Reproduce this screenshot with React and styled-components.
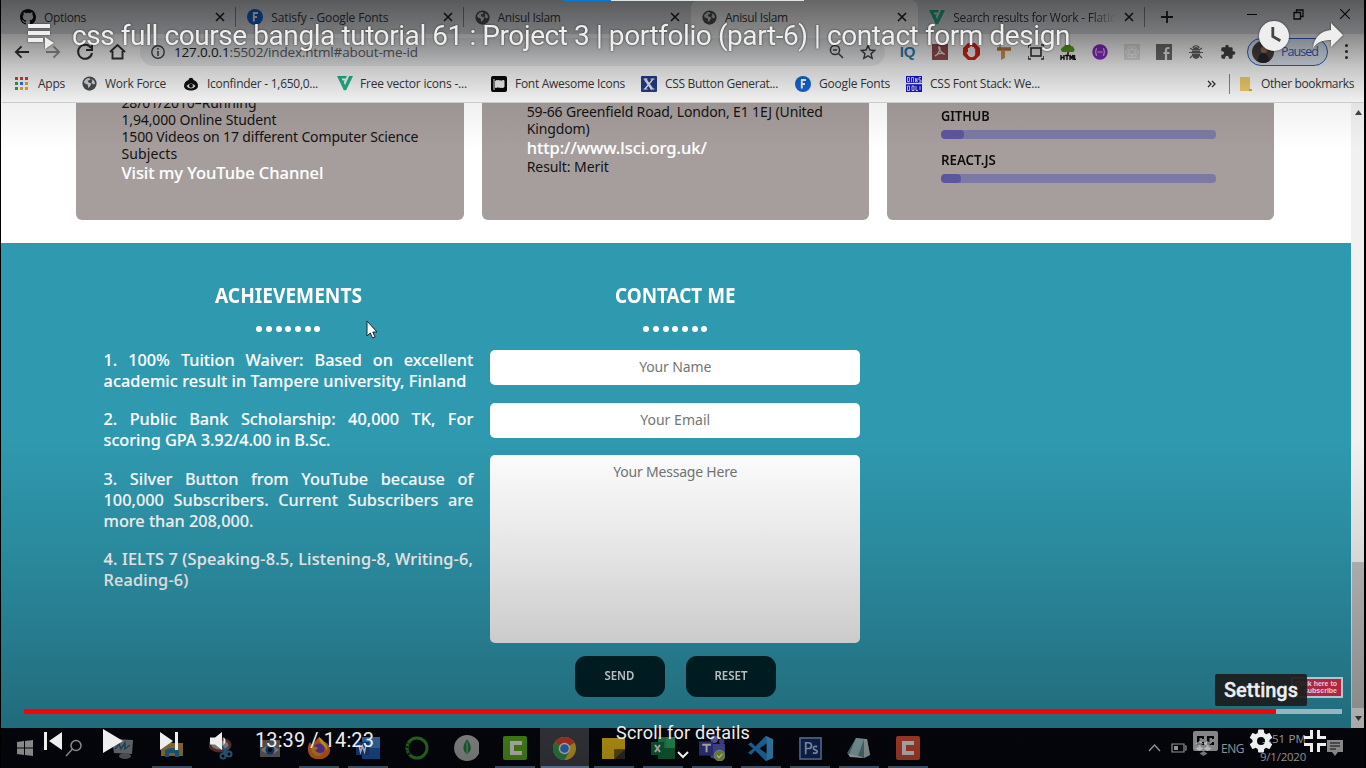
import React, { useLayoutEffect, useRef, useState } from "react";
import styled, { createGlobalStyle } from "styled-components";

const Global = createGlobalStyle`
  * { box-sizing: border-box; }
  html, body { margin: 0; padding: 0; background: #000; overflow: hidden; }
  body { font-family: "Open Sans", "Noto Sans", sans-serif; }
  svg { display: block; flex: none; }
`;

/* Text set to a known measure by adjusting its tracking. */
const Tracked = styled.span`
  display: inline-block;
  white-space: pre;
`;
function Fit({ w, children }) {
  const ref = useRef(null);
  const [spacing, setSpacing] = useState(0);
  useLayoutEffect(() => {
    const natural = ref.current.getBoundingClientRect().width;
    setSpacing((w - natural) / ref.current.textContent.length);
  }, [w]);
  return <Tracked ref={ref} style={{ letterSpacing: spacing }}>{children}</Tracked>;
}

/* Text set to a known measure by condensing its letterforms. */
const Condensed = styled(Tracked)`
  transform-origin: ${(p) => (p.$left ? "0 50%" : "50% 50%")};
`;
function Squeeze({ w, left, children }) {
  const ref = useRef(null);
  const [ratio, setRatio] = useState(1);
  useLayoutEffect(() => {
    setRatio(w / ref.current.offsetWidth);
  }, [w]);
  return <Condensed ref={ref} $left={left} style={{ transform: `scaleX(${ratio})` }}>{children}</Condensed>;
}

const Stage = styled.main`
  position: relative;
  width: 1366px;
  height: 768px;
  overflow: hidden;
  background: #000;
`;
const Desktop = styled.div`
  display: flex;
  flex-direction: column;
  width: 1366px;
  height: 768px;
  padding: 0 2px 0 1px;
`;

/* ---------- browser chrome ---------- */
const TabStrip = styled.div`
  display: flex;
  height: 34px;
  padding-left: 8px;
  background: #dee1e6;
  flex: none;
`;
const TabBox = styled.div`
  display: flex;
  align-items: center;
  width: 227.3px;
  padding: 0 ${(p) => (p.$divider ? 0 : 11)}px 0 11px;
  gap: 8px;
  font-size: 12px;
  color: #36383c;
  background: ${(p) => (p.$active ? "#fff" : "transparent")};
  border-radius: 8px 8px 0 0;
`;
const TabTitle = styled.div`
  flex: 1;
  overflow: hidden;
  white-space: nowrap;
  ${(p) => p.$fade && "mask-image: linear-gradient(90deg, #000 85%, transparent);"}
`;
const Divider = styled.i`
  width: 1px;
  height: 20px;
  background: #888;
  margin-left: ${(p) => p.$gap || 0}px;
  flex: none;
`;
const WindowButtons = styled.div`
  display: flex;
  align-items: center;
  justify-content: space-between;
  flex: none;
  width: 117px;
  margin-left: auto;
  padding: 0 13px 6px 0;
`;
const NewTab = styled.div`
  width: 40px;
  padding-left: 9px;
  display: flex;
  align-items: center;
`;
const AddressRow = styled.div`
  display: flex;
  align-items: center;
  height: 34px;
  padding-top: 1px;
  background: #fff;
  flex: none;
`;
const Nav = styled.div`
  display: flex;
  width: 139px;
  padding-left: 13px;
  gap: 15px;
  align-items: center;
`;
const UrlPill = styled.div`
  display: flex;
  align-items: center;
  width: 745px;
  height: 28px;
  padding: 0 8px 0 11px;
  border-radius: 14px;
  background: #eceef0;
  font-size: 13.5px;
  color: #5d6065;
  gap: 9px;
  b { font-weight: 400; color: #202124; }
`;
const UrlText = styled.div`flex: 1;`;
const PillIcons = styled.div`display: flex; gap: 16px; padding-right: 1px;`;
const Extensions = styled.div`
  display: flex;
  align-items: center;
  padding-left: 7px;
  > * { width: 32.05px; display: flex; justify-content: center; }
`;
const IqMark = styled.b`
  font: 700 15px/16px "Liberation Sans", sans-serif;
  color: #2c83b8;
`;
const Profile = styled.div`
  display: flex;
  align-items: center;
  width: 81px;
  height: 28px;
  margin-left: 3px;
  padding-left: 4px;
  gap: 7px;
  border: 1px solid #2c62c8;
  border-radius: 14px;
  background: #e3ebf8;
  color: #2a62c6;
  font-size: 12.5px;
`;
const Kebab = styled.div`
  width: 36px;
  display: flex;
  flex-direction: column;
  align-items: center;
  gap: 3px;
  i { width: 3px; height: 3px; border-radius: 50%; background: #333; }
`;
const Bookmarks = styled.div`
  display: grid;
  grid-template-columns: 67px 102px 153px 154px 150px 154px 111px 301px 22px 1fr;
  align-items: center;
  height: 35px;
  padding: 0 0 3px 14px;
  background: #fff;
  border-bottom: 1px solid #d8d8d8;
  font-size: 12px;
  color: #36383c;
  flex: none;
`;
const Mark = styled.div`
  display: flex;
  align-items: center;
  white-space: nowrap;
  gap: ${(p) => p.$gap || 8}px;
`;

/* ---------- page ---------- */
const Viewport = styled.div`
  display: flex;
  height: 625px;
  background: #fff;
  overflow: hidden;
  flex: none;
`;
const Page = styled.div`
  width: 1350px;
  display: flex;
  flex-direction: column;
  font-family: "Noto Sans", "Open Sans", sans-serif;
`;
const Cards = styled.section`
  display: flex;
  gap: 18px;
  height: 117px;
  padding-left: 75.4px;
  margin-bottom: 23px;
  flex: none;
`;
const Card = styled.article`
  width: 387.3px;
  padding: ${(p) => p.$top}px 0 0 ${(p) => p.$left || 45}px;
  background: #a69e9d;
  border-radius: 0 0 6px 6px;
  overflow: hidden;
`;
const CardLine = styled.div`
  height: 17px;
  font-size: 14px;
  line-height: 17px;
  color: #131313;
  white-space: nowrap;
`;
const CardLink = styled.div`
  height: 21px;
  font-size: 16.5px;
  line-height: 21px;
  font-weight: 500;
  color: #fff;
  -webkit-text-stroke: 0.1px #fff;
  white-space: nowrap;
`;
const Running = styled(CardLine)`margin-top: -9px;`;
const SkillName = styled.h4`
  margin: 0 0 6px;
  font-size: 14px;
  line-height: 17px;
  font-weight: 600;
  color: #0d0d0d;
`;
const SkillBar = styled.div`
  width: 275px;
  height: 9px;
  margin-bottom: 12px;
  border-radius: 4px;
  background: #7a7aa4;
  overflow: hidden;
`;
const SkillFill = styled.div`
  width: ${(p) => p.$w}px;
  height: 9px;
  border-radius: 4px;
  background: #5b579d;
`;
const Footer = styled.section`
  display: flex;
  flex: 1;
  gap: 17px;
  padding: 37px 0 0 102.5px;
  background: #2f99af;
`;
const Column = styled.div`
  width: 369.8px;
  display: flex;
  flex-direction: column;
`;
const Heading = styled.h2`
  margin: 0;
  height: 28px;
  text-align: center;
  font-size: 22px;
  line-height: 29px;
  font-weight: 700;
  color: #fff;
`;
const Dots = styled.div`
  display: flex;
  justify-content: center;
  gap: 3.7px;
  margin: 18px 0 18px;
  i { width: 6px; height: 6px; border-radius: 50%; background: #fff; }
`;
const Award = styled.p`
  margin: 0 0 17.4px;
  font-size: 16.3px;
  line-height: 21px;
  font-weight: 500;
  color: #fff;
  -webkit-text-stroke: 0.1px #fff;
`;
const Full = styled.span`
  display: block;
  text-align: justify;
  text-align-last: justify;
  white-space: nowrap;
`;
const Field = styled.div`
  height: ${(p) => p.$h}px;
  margin-bottom: ${(p) => p.$gap}px;
  padding-top: 7px;
  border-radius: 5px;
  background: #fff;
  color: #757575;
  text-align: center;
  font-size: 14px;
  line-height: 20px;
`;
const Actions = styled.div`
  display: flex;
  justify-content: center;
  gap: 21px;
`;
const Action = styled.div`
  display: flex;
  align-items: center;
  justify-content: center;
  width: 90px;
  height: 41px;
  padding-bottom: 2px;
  border-radius: 11px;
  background: #00242b;
  color: #f2f8fa;
  font-size: 12.5px;
  font-weight: 600;
`;
const ScrollTrack = styled.div`
  width: 13px;
  display: flex;
  flex-direction: column;
  align-items: center;
  padding: 7px 0 7px 1px;
  background: #f1f1f1;
`;
const ScrollThumb = styled.div`
  width: 12px;
  height: 148px;
  margin: 447px 0 8px;
  background: #c1c1c1;
`;

/* ---------- taskbar ---------- */
const Taskbar = styled.div`
  display: flex;
  height: 40px;
  background: #05080f;
  flex: none;
`;
const TaskIcons = styled.div`
  display: flex;
  margin-left: -1px;
`;
const TaskSlot = styled.div`
  display: flex;
  align-items: center;
  justify-content: center;
  width: 49.1px;
  background: ${(p) =>
    p.$active
      ? "linear-gradient(#88aacc, #88aacc) 50% 100% / 48px 2px no-repeat, #42454c"
      : p.$open
      ? "linear-gradient(#587795, #587795) 50% 100% / 40px 2px no-repeat"
      : "none"};
  > svg { opacity: ${(p) => (p.$dim ? 0.8 : 1)}; }
`;
const Tray = styled.div`
  display: flex;
  align-items: center;
  margin-left: auto;
  padding-right: 1px;
  color: #dcdcdc;
  font-size: 12px;
`;
const Clock = styled.div`
  width: 62px;
  text-align: right;
  font-size: 11.5px;
  line-height: 18px;
`;

/* ---------- player overlay ---------- */
const Shade = styled.div`
  position: absolute;
  inset: 0;
  background:
    linear-gradient(rgba(0,0,0,.6) 0, rgba(0,0,0,.46) 34px, rgba(0,0,0,.22) 68px, rgba(0,0,0,.06) 102px, transparent 150px),
    linear-gradient(transparent 440px, rgba(0,0,0,.1) 550px, rgba(0,0,0,.2) 640px, rgba(0,0,0,.3) 728px, rgba(0,0,0,.38) 768px);
`;
const SubscribeBadge = styled.div`
  position: absolute;
  left: 1291px;
  top: 677px;
  width: 52px;
  height: 21px;
  border: 2px solid #b5c3ca;
  background: #ad2642;
  color: #e7cdd3;
  text-align: right;
  padding: 1px 4px 0 0;
  font: 700 7px/7px "Liberation Sans", sans-serif;
  white-space: nowrap;
`;
const LoadBar = styled.div`
  position: absolute;
  left: 563px;
  top: 0;
  display: flex;
  width: 241px;
  height: 1px;
  background: #dce4e2;
  &::before { content: ""; width: 48px; background: #0878d6; }
`;
const TitleBar = styled.header`
  position: absolute;
  left: 0;
  right: 0;
  top: 12px;
  height: 48px;
  display: flex;
  align-items: center;
  padding: 0 22px 0 27px;
  color: #eee;
  filter: drop-shadow(0 0 1px rgba(0,0,0,.6));
`;
const Title = styled.h1`
  flex: 1;
  margin: 0 0 0 17px;
  font: 400 28px/40px Roboto, sans-serif;
  white-space: nowrap;
  padding-bottom: 1px;
`;
const TitleActions = styled.div`display: flex; gap: 22px; align-items: center;`;
const Tooltip = styled.div`
  position: absolute;
  left: 1215px;
  top: 674px;
  width: 92px;
  height: 32px;
  border-radius: 2px;
  background: rgba(28,28,28,.92);
  color: #eee;
  text-align: center;
  font: 500 20px/32px Roboto, sans-serif;
  -webkit-text-stroke: 0.3px #eee;
`;
const Player = styled.footer`
  position: absolute;
  left: 24px;
  right: 24px;
  top: 709px;
  display: flex;
  flex-direction: column;
`;
const Progress = styled.div`
  height: 5px;
  background: #94b7bf;
`;
const Played = styled.div`
  width: 1252px;
  height: 5px;
  background: #f00;
`;
const Controls = styled.div`
  display: flex;
  align-items: center;
  height: 54px;
  color: #eee;
  font: 400 20px/24px Roboto, sans-serif;
  white-space: nowrap;
`;
const Transport = styled.div`
  display: flex;
  align-items: center;
  width: 592px;
  padding-left: 20px;
`;
const Elapsed = styled.div`margin: 0 0 3px 27px;`;
const Details = styled.div`
  width: 134px;
  height: 54px;
  padding-top: 7px;
  font-size: 18px;
  display: flex;
  flex-direction: column;
  align-items: center;
`;
const RightControls = styled.div`
  display: flex;
  align-items: center;
  margin-left: auto;
  padding-right: 16px;
  gap: 31px;
`;
const Pointer = styled.div`position: absolute; left: 366px; top: 320px;`;

/* ---------- drawings ---------- */
const Svg = ({ s = 16, w, h, vb = "0 0 24 24", children, ...r }) => (
  <svg width={w || s} height={h || s} viewBox={vb} fill="currentColor" {...r}>{children}</svg>
);
const line = { fill: "none", stroke: "currentColor" };

const CloseX = ({ s = 10, c = "#222", sw = 1.6 }) => (
  <Svg s={s} vb="0 0 10 10"><path d="M1 1L9 9M9 1L1 9" fill="none" stroke={c} strokeWidth={sw} /></Svg>
);
const Github = () => (
  <Svg s={16} vb="0 0 16 16"><path fill="#111" d="M8 0C3.58 0 0 3.58 0 8c0 3.54 2.29 6.53 5.47 7.59.4.07.55-.17.55-.38 0-.19-.01-.82-.01-1.49-2.01.37-2.53-.49-2.69-.94-.09-.23-.48-.94-.82-1.13-.28-.15-.68-.52-.01-.53.63-.01 1.08.58 1.23.82.72 1.21 1.87.87 2.33.66.07-.52.28-.87.51-1.07-1.78-.2-3.64-.89-3.64-3.95 0-.87.31-1.59.82-2.15-.08-.2-.36-1.02.08-2.12 0 0 .67-.21 2.2.82a7.6 7.6 0 014 0c1.53-1.04 2.2-.82 2.2-.82.44 1.1.16 1.92.08 2.12.51.56.82 1.27.82 2.15 0 3.07-1.87 3.75-3.65 3.95.29.25.54.73.54 1.48 0 1.07-.01 1.93-.01 2.2 0 .21.15.46.55.38A8 8 0 0016 8c0-4.42-3.58-8-8-8z" /></Svg>
);
const Globe = () => (
  <Svg s={15} vb="0 0 16 16">
    <circle cx="8" cy="8" r="7.6" fill="#4c4f53" />
    <path d="M2 6c2-3 3-4 6-4l1 2-3 1 1 2 3 1-1 2-2 3-1-4-3-1zM10 3l3 2 1 3-2 1-2-2 1-2z" fill="#d8dadd" />
  </Svg>
);
const CircleF = () => (
  <Svg s={16} vb="0 0 16 16"><circle cx="8" cy="8" r="8" fill="#1467d8" /><path d="M6 4h5M6.8 4v8.5M6.8 8H10" stroke="#fff" strokeWidth="1.9" fill="none" /></Svg>
);
const Flaticon = () => (
  <Svg w={16} h={15} vb="0 0 16 15"><path d="M0 0h10L8.800 2.400H4.600L5.600 4.400H7.800L6.800 6.600 8 9 12.200 0H16L9.200 14.200H6.800z" fill="#25b58c" /></Svg>
);
const AppsGrid = () => (
  <Svg s={13} vb="0 0 13 13">
    {["#d33c32", "#d33c32", "#d33c32", "#2f9d58", "#2d76d6", "#e5a92c", "#2f9d58", "#e5a92c", "#e5a92c"].map((c, i) => (
      <rect key={i} x={(i % 3) * 5} y={Math.floor(i / 3) * 5} width="3" height="3" fill={c} />
    ))}
  </Svg>
);
const EyeLogo = () => (
  <Svg w={14} h={14} vb="0 0 14 14"><path d="M4.500 3C5 0 9 0 9.500 3c3 1 4.500 3 4.500 6 0 6-14 6-14 0 0-3 1.500-5 4.500-6z" fill="#111" /><path d="M2.500 9q4.500-5 9 0-4.500 5-9 0z" fill="#eee" /><circle cx="7" cy="8.800" r="2" fill="#111" /></Svg>
);
const FlagLogo = () => (
  <Svg s={16} vb="0 0 16 16"><rect width="16" height="16" rx="2" fill="#080808" /><path d="M3 3v11M4.500 5c3-1.500 4 1 8.500-.5V11c-4 1.500-5-1-8.500.5z" fill="#f1f1f1" stroke="#f1f1f1" /></Svg>
);
const XLogo = () => (
  <Svg s={16} vb="0 0 16 16"><rect width="16" height="16" rx="1" fill="#263c86" /><path d="M4 3l7 10M12 3L4 13" stroke="#e6e8f4" strokeWidth="1.400" /><path d="M4 3l7 10" stroke="#e6e8f4" strokeWidth="2.400" /><path d="M2.500 3h4M9.500 3h4M2.500 13h4M9.500 13h4" stroke="#e6e8f4" /></Svg>
);
const DansLogo = () => (
  <Svg s={16} vb="0 0 16 16"><rect width="16" height="16" fill="#1515d0" /><path d="M0 7.500h16" stroke="#fff" strokeWidth="1.400" /><path d="M1.500 1.500v4h2v-4zM5.500 6V1.500h2V6M9.500 6V2l1.500 4V2M15 1.500h-2V4h2v2h-2M1.500 10v4.500h2V10zM6 10h2v4.500H6zM10 10v4.500h2M14 10v4" fill="none" stroke="#fff" strokeWidth=".8" /></Svg>
);
const Folder = () => (
  <Svg w={13} h={14} vb="0 0 13 14"><path d="M1 0h10v12l1 2H1z" fill="#f2cf6a" /><path d="M10 12h3v2h-3z" fill="#d5aa3a" /></Svg>
);
const Back = ({ flip, c = "#333" }) => (
  <Svg w={16} h={14} vb="0 0 17 14" style={flip ? { transform: "scaleX(-1)" } : undefined}><path d="M16 7H2M8 1L2 7l6 6" fill="none" stroke={c} strokeWidth="2" /></Svg>
);

const extensionIcons = [
  <IqMark key="iq">IQ</IqMark>,
  <Svg key="pdf" vb="0 0 16 16"><rect width="16" height="16" fill="#97504f" /><path d="M3 12c4-2 6-8 4.500-9S6 7 12.800 10.500C10 8.500 5 9.500 3 12z" fill="none" stroke="#ecdada" strokeWidth="1.300" /></Svg>,
  <Svg key="hand" w={17} h={17} vb="0 0 17 17"><path d="M5 0h7l5 5v7l-5 5H5l-5-5V5z" fill="#df2118" /><path d="M5 9V5h1.500V3.500H8V3h1.300v1H11v1.500h1.200V11c0 4-6 4-7.200 1L3.500 9.500z" fill="#fff" /></Svg>,
  <Svg key="crane" vb="0 0 16 16"><path d="M1 3h14v4H9v7l-4 2V7H1z" fill="#d39a5b" /><path d="M4 1v4M1 5h14" stroke="#9c6830" /></Svg>,
  <Svg key="frame" vb="0 0 16 16"><rect x="3" y="4" width="10" height="8" {...line} stroke="#333" strokeWidth="1.600" /><path d="M0 4V1h3M13 1h3v3M0 12v3h3M13 15h3v-3" fill="none" stroke="#333" strokeWidth="1.500" /></Svg>,
  <Svg key="tree" vb="0 0 16 16"><path d="M7 5h2v6H7z" fill="#6d4a20" /><path d="M1 6C1 3 4 3 5 1c2-2 5-1 6 1 3 0 5 5 2 6H3C2 8 1 7 1 6z" fill="#58a51d" /><path d="M1 11v5M4 11v5M1 13.500h3M5 11.500h4M7 11v5M10 16v-5l1.500 3 1.500-3v5M14.500 11v4.500H16" fill="none" stroke="#111" strokeWidth="1.400" /></Svg>,
  <Svg key="braces" vb="0 0 16 16"><circle cx="8" cy="8" r="7.700" fill="#8a2bc6" /><path d="M5 4.500c-2 0 0 3.500-2 3.500 2 0 0 3.500 2 3.500M11 4.500c2 0 0 3.500 2 3.500-2 0 0 3.500-2 3.500M5.500 8h5" fill="none" stroke="#ecd4fa" strokeWidth="1.200" /></Svg>,
  <Svg key="atom" vb="0 0 16 16" opacity=".35"><rect width="16" height="16" fill="#aaa" /><g {...line} stroke="#eee"><ellipse cx="8" cy="8" rx="6.500" ry="2.500" /><ellipse cx="8" cy="8" rx="6.500" ry="2.500" transform="rotate(60 8 8)" /><ellipse cx="8" cy="8" rx="6.500" ry="2.500" transform="rotate(120 8 8)" /></g></Svg>,
  <Svg key="fb" vb="0 0 16 16"><rect width="16" height="16" fill="#717171" /><path d="M13.500 4H12c-1.500 0-2 1-2 2.200V16M7.500 9h6" fill="none" stroke="#f1f1f1" strokeWidth="2.200" /></Svg>,
  <Svg key="bug" vb="0 0 16 16"><path d="M5 4c0-3 6-3 6 0M2 4l3 2M14 4l-3 2M1 8.500h3M12 8.500h3M2 14l3-3M14 14l-3-3" fill="none" stroke="#666" strokeWidth="1.200" /><ellipse cx="8" cy="9" rx="4.200" ry="6" fill="#666" /><path d="M4 6.500h8M4 9.500h8" stroke="#aaa" /></Svg>,
  <Svg key="puzzle" vb="0 0 24 24"><path fill="#454545" d="M20.500 11H19V7a2 2 0 00-2-2h-4V3.500a2.500 2.500 0 00-5 0V5H4a2 2 0 00-2 2v3.800h1.500a2.700 2.700 0 010 5.400H2V20c0 1.100.9 2 2 2h3.800v-1.500a2.700 2.700 0 015.400 0V22H17a2 2 0 002-2v-4h1.500a2.500 2.500 0 000-5z" /></Svg>,
];

const tabs = [
  { icon: <Github />, title: "Options", w: 42, divider: true },
  { icon: <CircleF />, title: "Satisfy - Google Fonts", w: 117, divider: true },
  { icon: <Globe />, title: "Anisul Islam", w: 63 },
  { icon: <Globe />, title: "Anisul Islam", w: 63, active: true },
  { icon: <Flaticon />, title: "Search results for Work - Flatic", w: 162, fade: true, divider: true },
];
const bookmarks = [
  [<AppsGrid />, "Apps", 27, 10],
  [<Globe />, "Work Force", 61, 8],
  [<EyeLogo />, "Iconfinder - 1,650,0...", 111, 9],
  [<Flaticon />, "Free vector icons -...", 107, 7],
  [<FlagLogo />, "Font Awesome Icons", 110, 8],
  [<XLogo />, "CSS Button Generat...", 113, 8],
  [<CircleF />, "Google Fonts", 71, 8],
  [<DansLogo />, "CSS Font Stack: We...", 110, 8],
];

const Tile = ({ bg, children }) => (
  <Svg s={24} vb="0 0 24 24"><rect width="24" height="24" rx="2" fill={bg} />{children}</Svg>
);
const taskIcons = [
  { i: <Svg s={16} vb="0 0 16 16"><path fill="#ccc" d="M0 2l7-1v6.500H0zM8 1l8-1v7.500H8zM0 8.500h7V15l-7-1zM8 8.500h8V16l-8-1z" /></Svg> },
  { i: <Svg s={18} vb="0 0 18 18"><circle cx="11" cy="6.500" r="5" {...line} stroke="#ccc" strokeWidth="1.500" /><path d="M7.500 10L1 17" stroke="#ccc" strokeWidth="1.500" /></Svg> },
  { i: <Svg s={24}><path d="M1 3l21 1-1 14-18-1z" fill="#aab5bc" /><path d="M4 13l4-5 2 5 4-6v6l5-4" {...line} stroke="#347899" strokeWidth="1.500" /><ellipse cx="14" cy="20" rx="6" ry="3" fill="#8b9398" /></Svg>, dim: true },
  { i: <Svg s={24}><path d="M1 4h9l2 3h11v13H1z" fill="#e5bb58" /><path d="M5 21v-7q7-4 14 0v7h-4v-4H9v4z" fill="#3198cc" /></Svg>, open: true, dim: true },
  { i: <Svg s={24}><ellipse cx="11" cy="9" rx="10" ry="6" fill="#ddd" stroke="#a3494b" strokeWidth="3" /><path d="M13 10l5 8M20 11l-6 7" stroke="#4796ca" strokeWidth="2" /><circle cx="14" cy="20" r="2.500" {...line} stroke="#4796ca" strokeWidth="2" /><circle cx="20" cy="18" r="2.500" {...line} stroke="#4796ca" strokeWidth="2" /></Svg>, dim: true },
  { i: <Svg s={24}><path d="M2 4h20v17H2z" fill="#949089" /><path d="M3 14q9-9 18 0-9 8-18 0z" fill="#ddd" /><circle cx="12" cy="14" r="4.500" fill="#2857aa" /><circle cx="12" cy="14" r="2" fill="#111" /></Svg>, dim: true },
  { i: <Svg s={24}><path d="M12 1c4 3 4 5 8 6 8 10-2 17-8 16C2 24-2 14 3 6l2 3c2-1 2-3 7-8z" fill="#f0702a" /><path d="M12 1c4 3 10 9 8 14-2-7-8-6-8-14z" fill="#ffd43d" /><circle cx="12" cy="13" r="5.500" fill="#7441b4" /><path d="M4 12q4-3 7 0-1 2-3 2 3 5 9 2-6 8-12 0z" fill="#f39a2c" /></Svg>, open: true },
  { i: <Svg s={24}><path d="M6 1h18v22H6z" fill="#3c88d6" /><path d="M6 12h18v11H6z" fill="#1f5cb0" /><rect y="6" width="13" height="13" fill="#1749a0" /><path d="M3 9l1.500 7L6.500 10l2 6L10 9" {...line} stroke="#fff" strokeWidth="1.500" /></Svg>, open: true },
  { i: <Svg s={24}><circle cx="12" cy="12" r="10" {...line} stroke="#3fae33" strokeWidth="3" /><circle cx="12" cy="12" r="10" {...line} stroke="#123c11" strokeWidth="2.500" strokeDasharray="2 2 1 2 2 2 1 50" transform="rotate(140 12 12)" /></Svg>, dim: true },
  { i: <Svg s={26}><circle cx="13" cy="12" r="12" fill="#d7ddda" /><path d="M13 4c5 6 4 11 0 14-4-3-5-8 0-14z" fill="#2e9b50" /><path d="M13 7v14" stroke="#b7e0c1" /></Svg>, dim: true },
  { i: <Tile bg="#5aab1d"><path d="M19 7H9v10h10" {...line} stroke="#eee" strokeWidth="4" /></Tile>, open: true },
  { i: <Svg s={23}><circle cx="12" cy="12" r="12" fill="#e3b72d" /><path d="M12 12L1.600 6A12 12 0 0122.400 6z" fill="#d8432f" /><path d="M1.600 6A12 12 0 0012 24l5-9-5-3z" fill="#359c51" /><circle cx="12" cy="12" r="6" fill="#eee" /><circle cx="12" cy="12" r="4.500" fill="#3b7ee0" /></Svg>, active: true },
  { i: <Svg s={23}><path d="M0 1h24v13L14 23H0z" fill="#eec317" /><path d="M24 13v10H13V13z" fill="#343434" /><path d="M24 13L13 23V13z" fill="#765e12" /></Svg>, open: true },
  { i: <Svg s={24}><path d="M7 1h17v22H7z" fill="#229a5a" /><path d="M7 12h17v11H7z" fill="#18713f" /><path d="M15 1h9v11h-9z" fill="#2fae6c" /><path d="M0 6h13v13H0z" fill="#107040" /><path d="M4 9l5 7M9 9l-5 7" stroke="#eee" strokeWidth="2" /></Svg>, open: true },
  { i: <Svg s={26}><circle cx="14" cy="4" r="3.500" fill="#7378d4" /><circle cx="21" cy="6" r="2.500" fill="#5159bd" /><path d="M7 8h17v8q-4 8-13 5z" fill="#595fc2" /><path d="M0 6h13v13H0z" fill="#3b429f" /><path d="M3 9h8M7 9v7" stroke="#eee" strokeWidth="1.800" /><circle cx="19" cy="19" r="5" fill="#92bd3a" stroke="#ddd" strokeWidth=".6" /><path d="M16.500 19l2 2 3-3.500" {...line} stroke="#fff" strokeWidth="1.400" /></Svg>, open: true },
  { i: <Svg s={25}><path d="M17 0l7 3v18l-7 3L7 14l-4 4-3-2 5-4-5-4 3-2 4 4zm1 7l-7 5 7 5z" fill="#278bd2" /><path d="M17 0l7 3v18l-7 3 1-3V3z" fill="#45a5e6" /></Svg>, open: true },
  { i: <Svg s={23}><rect x="1" y="1" width="22" height="22" fill="#162b62" stroke="#7fa9dc" strokeWidth="1.500" /><path d="M7 18V6h3q3 0 3 3t-3 3H7M19 10q-4-1-4 1.500 0 1.500 2 2t2 2q0 2-4.500 1" {...line} stroke="#a9cdf2" strokeWidth="1.800" /></Svg>, open: true },
  { i: <Svg s={24}><path d="M9 2l11 1 3 16-6 3-14-2-3-3z" fill="#5d8a94" /><path d="M9 2l8 1-6 17-9-1z" fill="#a3c6cb" /><path d="M17 3l3 0 3 16-6 3z" fill="#b9c8c9" /><path d="M1 18l11 2 5 2-14-1z" fill="#dadfdd" /></Svg>, open: true },
  { i: <Tile bg="#d64e35"><path d="M18 7H8v10h10" {...line} stroke="#eee" strokeWidth="4" /></Tile>, open: true },
];

export default function App() {
  return (
    <Stage>
      <Global />
      <Desktop>
        <TabStrip>
          {tabs.map((t, i) => (
            <TabBox key={i} $active={t.active} $divider={t.divider}>
              {t.icon}
              <TabTitle $fade={t.fade}><Fit w={t.w}>{t.title}</Fit></TabTitle>
              <CloseX />
              {t.divider && <Divider $gap={2} />}
            </TabBox>
          ))}
          <NewTab>
            <Svg s={24} vb="0 0 24 24"><path d="M13 6v12M7 12h12" stroke="#222" strokeWidth="1.800" /></Svg>
          </NewTab>
          <WindowButtons>
            <Svg s={10} vb="0 0 10 10"><path d="M0 5.500h10" stroke="#111" /></Svg>
            <Svg s={11} vb="0 0 11 11"><path d="M1 3.500h6.500V10H1zM3.500 3V1H10v6.500H8" fill="none" stroke="#111" strokeWidth="1.300" /></Svg>
            <CloseX s={12} c="#111" sw={1} />
          </WindowButtons>
        </TabStrip>

        <AddressRow>
          <Nav>
            <Back /><Back flip c="#999" />
            <Svg s={18} vb="0 0 18 18"><path d="M15 5A7 7 0 1016 10M16 1v6h-6" {...line} stroke="#333" strokeWidth="2" /></Svg>
            <Svg s={17} vb="0 0 17 17"><path d="M1 9l7.500-7L16 9M3.500 8v7.500h10V8" {...line} stroke="#333" strokeWidth="1.900" /></Svg>
          </Nav>
          <UrlPill>
            <Svg s={14} vb="0 0 14 14"><circle cx="7" cy="7" r="6.200" {...line} stroke="#444" strokeWidth="1.400" /><path d="M7 3v1.600M7 6v5" stroke="#444" strokeWidth="1.500" /></Svg>
            <UrlText><Fit w={244}><b>127.0.0.1</b>:5502/index.html#about-me-id</Fit></UrlText>
            <PillIcons>
              <Svg s={15} vb="0 0 15 15"><circle cx="6" cy="6" r="4.600" {...line} stroke="#444" strokeWidth="1.500" /><path d="M9.500 9.500L14 14M4 6h4" stroke="#444" strokeWidth="1.500" /></Svg>
              <Svg s={16} vb="0 0 24 24"><path d="M12 2.500l2.900 6.500 7 .7-5.300 4.700 1.600 7L12 17.700l-6.200 3.700 1.600-7L2.100 9.700l7-.7z" {...line} stroke="#444" strokeWidth="2.200" /></Svg>
            </PillIcons>
          </UrlPill>
          <Extensions>{extensionIcons.map((icon, i) => <div key={i}>{icon}</div>)}</Extensions>
          <Profile>
            <Svg s={22} vb="0 0 20 20"><circle cx="10" cy="10" r="10" fill="#49413f" /><path d="M5 18q1-7 5-7t6 7q-6 4-11 0z" fill="#26272c" /><circle cx="11" cy="8" r="3" fill="#a0715c" /></Svg>
            <Fit w={37}>Paused</Fit>
          </Profile>
          <Kebab><i /><i /><i /></Kebab>
        </AddressRow>

        <Bookmarks>
          {bookmarks.map(([icon, name, w, gap]) => (
            <Mark key={name} $gap={gap}>{icon}<Fit w={w}>{name}</Fit></Mark>
          ))}
          <Mark $gap={9}>
            <Svg w={9} h={8} vb="0 0 9 8"><path d="M1 1l3 3-3 3M5 1l3 3-3 3" {...line} stroke="#333" strokeWidth="1.300" /></Svg>
          </Mark>
          <Mark $gap={9}><Divider /><Folder /><Fit w={93}>Other bookmarks</Fit></Mark>
        </Bookmarks>

        <Viewport>
          <Page>
            <Cards>
              <Card $top={0}>
                <Running><Fit w={135}>28/01/2010–Running</Fit></Running>
                <CardLine><Fit w={155}>1,94,000 Online Student</Fit></CardLine>
                <CardLine><Fit w={297}>1500 Videos on 17 different Computer Science</Fit></CardLine>
                <CardLine><Fit w={56}>Subjects</Fit></CardLine>
                <CardLink><Fit w={202}>Visit my YouTube Channel</Fit></CardLink>
              </Card>
              <Card $top={0}>
                <CardLine><Fit w={296}>59-66 Greenfield Road, London, E1 1EJ (United</Fit></CardLine>
                <CardLine><Fit w={63}>Kingdom)</Fit></CardLine>
                <CardLink><Fit w={180}>http://www.lsci.org.uk/</Fit></CardLink>
                <CardLine><Fit w={82}>Result: Merit</Fit></CardLine>
              </Card>
              <Card $top={4} $left={54}>
                <SkillName><Squeeze left w={49}>GITHUB</Squeeze></SkillName>
                <SkillBar><SkillFill $w={23} /></SkillBar>
                <SkillName><Squeeze left w={55}>REACT.JS</Squeeze></SkillName>
                <SkillBar><SkillFill $w={20} /></SkillBar>
              </Card>
            </Cards>
            <Footer>
              <Column>
                <Heading><Squeeze w={147}>ACHIEVEMENTS</Squeeze></Heading>
                <Dots>{Array.from({ length: 7 }, (_, i) => <i key={i} />)}</Dots>
                <Award>
                  <Full>1. 100% Tuition Waiver: Based on excellent</Full>
                  <Fit w={363}>academic result in Tampere university, Finland</Fit>
                </Award>
                <Award>
                  <Full>2. Public Bank Scholarship: 40,000 TK, For</Full>
                  <Fit w={227}>scoring GPA 3.92/4.00 in B.Sc.</Fit>
                </Award>
                <Award>
                  <Full>3. Silver Button from YouTube because of</Full>
                  <Full>100,000 Subscribers. Current Subscribers are</Full>
                  <Fit w={150}>more than 208,000.</Fit>
                </Award>
                <Award>
                  <Fit w={369.5}>4. IELTS 7 (Speaking-8.5, Listening-8, Writing-6,</Fit>
                  <Fit w={85}>Reading-6)</Fit>
                </Award>
              </Column>
              <Column>
                <Heading><Squeeze w={121}>CONTACT ME</Squeeze></Heading>
                <Dots>{Array.from({ length: 7 }, (_, i) => <i key={i} />)}</Dots>
                <Field $h={35} $gap={18}><Fit w={72}>Your Name</Fit></Field>
                <Field $h={35} $gap={17}><Fit w={70}>Your Email</Fit></Field>
                <Field $h={188} $gap={13}><Fit w={124}>Your Message Here</Fit></Field>
                <Actions>
                  <Action><Squeeze w={30}>SEND</Squeeze></Action>
                  <Action><Squeeze w={33}>RESET</Squeeze></Action>
                </Actions>
              </Column>
            </Footer>
          </Page>
          <ScrollTrack>
            <Svg w={7} h={5} vb="0 0 7 5"><path d="M0 5l3.500-5L7 5z" fill="#444" /></Svg>
            <ScrollThumb />
            <Svg w={7} h={5} vb="0 0 7 5"><path d="M0 0l3.500 5L7 0z" fill="#444" /></Svg>
          </ScrollTrack>
        </Viewport>

        <Taskbar>
          <TaskIcons>
            {taskIcons.map((t, i) => (
              <TaskSlot key={i} $open={t.open} $active={t.active} $dim={t.dim}>{t.i}</TaskSlot>
            ))}
          </TaskIcons>
          <Tray>
            <Svg w={13} h={8} vb="0 0 13 8"><path d="M1 7l5.500-6L12 7" {...line} strokeWidth="1.400" /></Svg>
            <Svg w={16} h={10} vb="0 0 16 10" style={{ marginLeft: 10 }}><path d="M1 1h12v8H1zM14 3h1v4h-1" {...line} strokeWidth="1.200" /><rect x="3" y="3" width="4" height="4" /></Svg>
            <Svg w={17} h={15} vb="0 0 17 15" style={{ marginLeft: 8, marginRight: 9 }}><path d="M4.500 0l4 2.500-4 2.500-4-2.500zM12.500 0l4 2.500-4 2.500-4-2.500zM4.500 5l4 2.500-4 2.500-4-2.500zM12.500 5l4 2.500-4 2.500-4-2.500zM8.500 10l4 2.500-4 2.500-4-2.500z" opacity=".8" /></Svg>
            <Fit w={23}>ENG</Fit>
            <Clock><Fit w={44}>3:51 PM</Fit><br /><Fit w={46}>9/1/2020</Fit></Clock>
            <Svg w={16} h={16} vb="0 0 16 16" style={{ marginLeft: 21, marginRight: 20 }}><path d="M0 0h16v12h-5l-3 4-3-4H0z" fill="#ccc" /><path d="M3 3h10M3 6h10M3 9h6" stroke="#111" /></Svg>
          </Tray>
        </Taskbar>
      </Desktop>

      <Pointer>
        <Svg w={12} h={19} vb="0 0 12 19"><path d="M1 1v15l3.300-3 2.200 5 2.500-1-2.200-5H11z" fill="#fff" stroke="#222" /></Svg>
      </Pointer>
      <Shade />
      <SubscribeBadge>Click here to<br />subscribe</SubscribeBadge>
      <LoadBar />

      <TitleBar>
        <Svg w={28} h={27} vb="0 0 28 27"><path d="M1 1h22v4H1zM1 8h22v4H1zM1 15h15v4H1zM18 14l9 6-9 6z" /></Svg>
        <Title><Fit w={998}>css full course bangla tutorial 61 : Project 3 | portfolio (part-6) | contact form design</Fit></Title>
        <TitleActions>
          <Svg s={32} vb="0 0 32 32"><circle cx="16" cy="16" r="15" /><path d="M14.800 7v9.500l7.500 4.300" fill="none" stroke="#444" strokeWidth="2.800" /></Svg>
          <Svg w={32} h={26} vb="0 0 32 26"><path d="M19 0l12 12-12 12v-7C11 17 5 19 1 25 2 15 8 8 19 7z" /></Svg>
        </TitleActions>
      </TitleBar>

      <Tooltip><Fit w={74}>Settings</Fit></Tooltip>

      <Player>
        <Progress><Played /></Progress>
        <Controls>
          <Transport>
            <Svg w={18} h={18} vb="0 0 18 18"><path d="M0 0h3v18H0zM18 0v18L5 9z" /></Svg>
            <Svg w={20} h={24} vb="0 0 20 24" style={{ marginLeft: 41 }}><path d="M0 0l20 12L0 24z" /></Svg>
            <Svg w={18} h={18} vb="0 0 18 18" style={{ marginLeft: 37 }}><path d="M15 0h3v18h-3zM0 0v18l13-9z" /></Svg>
            <Svg w={18} h={18} vb="0 0 18 18" style={{ marginLeft: 32 }}><path d="M0 5.500h5L12 0v18l-7-5.500H0zM13.500 5q4 4 0 8z" /></Svg>
            <Elapsed><Fit w={119}>13:39 / 14:23</Fit></Elapsed>
          </Transport>
          <Details>
            <Fit w={134}>Scroll for details</Fit>
            <Svg w={12} h={8} vb="0 0 12 8" style={{ marginTop: 6 }}><path d="M1 1l5 5 5-5" {...line} strokeWidth="2" /></Svg>
          </Details>
          <RightControls>
            <Svg w={25} h={20} vb="0 0 25 20" opacity=".55"><path fillRule="evenodd" d="M2 0h21q2 0 2 2v16q0 2-2 2H2q-2 0-2-2V2q0-2 2-2zm2 5v9h7v-3H9v1H6.500V7H9v1h2V5zm10 0v9h7v-3h-2v1h-2.500V7H19v1h2V5z" /></Svg>
            <Svg s={24} vb="1.500 1.500 21 21"><path fillRule="evenodd" d="M19.430 12.980c.04-.32.07-.64.07-.98s-.03-.66-.07-.98l2.110-1.650c.19-.15.24-.42.12-.64l-2-3.460c-.12-.22-.39-.3-.61-.22l-2.490 1c-.52-.4-1.080-.73-1.690-.98l-.38-2.650C14.460 2.180 14.250 2 14 2h-4c-.25 0-.46.18-.49.42l-.38 2.650c-.61.25-1.170.59-1.690.98l-2.490-1c-.23-.09-.49 0-.61.22l-2 3.460c-.13.22-.07.49.12.64l2.110 1.650c-.04.32-.07.65-.07.98s.03.66.07.98l-2.110 1.650c-.19.15-.24.42-.12.64l2 3.460c.12.22.39.3.61.22l2.490-1c.52.4 1.080.73 1.690.98l.38 2.650c.03.24.24.42.49.42h4c.25 0 .46-.18.49-.42l.38-2.650c.61-.25 1.170-.59 1.690-.98l2.490 1c.23.09.49 0 .61-.22l2-3.460c.12-.22.07-.49-.12-.64zM12 15.500a3.500 3.500 0 110-7 3.500 3.500 0 010 7z" /></Svg>
            <Svg s={22} vb="0 0 22 22"><path d="M6 0h3v9H0V6h6zM13 0h3v6h6v3h-9zM0 13h9v9H6v-6H0zM13 13h9v3h-6v6h-3z" /></Svg>
          </RightControls>
        </Controls>
      </Player>
    </Stage>
  );
}
